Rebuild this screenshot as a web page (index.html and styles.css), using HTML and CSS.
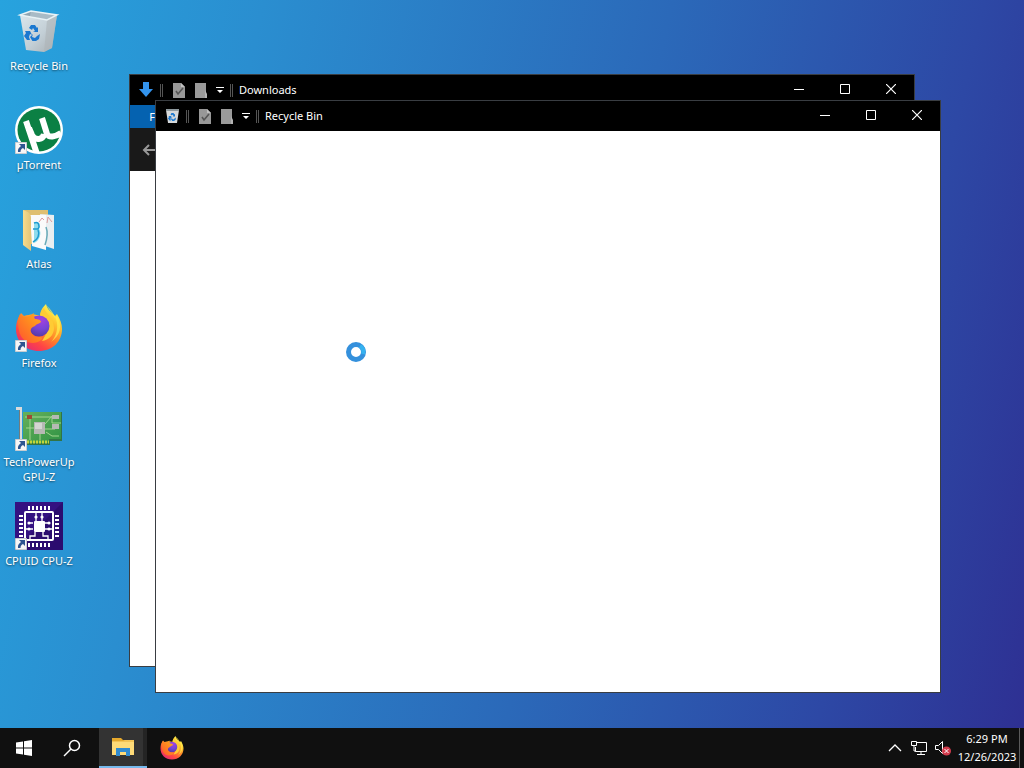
FILE: index.html
```html
<!DOCTYPE html>
<html lang="en">
<head>
<meta charset="utf-8">
<meta name="viewport" content="width=device-width, initial-scale=1">
<title>Desktop</title>
<link rel="stylesheet" href="styles.css">
</head>
<body>
<svg class="defs" aria-hidden="true">
  <defs>
    <linearGradient id="bin-body" x1="0" y1="0" x2="1" y2="1"><stop offset="0" stop-color="#dbe6ec"/><stop offset=".55" stop-color="#c3cfd6"/><stop offset="1" stop-color="#a7adb1"/></linearGradient>
    <linearGradient id="fx-body" x1=".85" y1=".05" x2=".25" y2=".95"><stop offset=".05" stop-color="#fff44f"/><stop offset=".3" stop-color="#ffc12e"/><stop offset=".55" stop-color="#ff842a"/><stop offset=".8" stop-color="#ff4445"/><stop offset="1" stop-color="#e92f6c"/></linearGradient>
    <linearGradient id="fx-head" x1="0" y1="1" x2="1" y2="0"><stop offset="0" stop-color="#ff542f"/><stop offset=".6" stop-color="#ff8c1f"/><stop offset="1" stop-color="#ffab25"/></linearGradient>
    <radialGradient id="fx-globe" cx=".6" cy=".2" r=".9"><stop offset="0" stop-color="#a640df"/><stop offset=".5" stop-color="#7645d6"/><stop offset="1" stop-color="#51379c"/></radialGradient>
    <linearGradient id="folder" x1="0" y1="0" x2="1" y2="0"><stop offset="0" stop-color="#f8dc8c"/><stop offset="1" stop-color="#e3c477"/></linearGradient>
    <linearGradient id="board" x1="0" y1="0" x2="1" y2="1"><stop offset="0" stop-color="#66b05b"/><stop offset="1" stop-color="#2f9344"/></linearGradient>
    <clipPath id="disc"><circle cx="24" cy="24" r="23"/></clipPath>
  </defs>
  <symbol id="recycle" viewBox="0 0 16 16">
    <path fill="#1b78d0" d="M5 3 7 0h4l2 3 1-1v5H9l2-1-2-3-1 2zM1 6h5l2 4-2-1-1 3 1 3H3L0 11l2-3zM9 9l-1 3 3 1 2-2 3-2-1 5-3 2h-3v1L6 12z"/>
  </symbol>
  <symbol id="shortcut" viewBox="0 0 12 12">
    <path fill="#f6f6f6" stroke="#c8ccd0" d="M.5.5h11v11H.5z"/>
    <path fill="#2d5590" d="M4 2h6v6L8 6C6 7 5.500 8 5.500 10H3C2.500 7 4 5.500 6 4z"/>
  </symbol>
  <symbol id="firefox" viewBox="0 0 48 48">
    <path fill="url(#fx-body)" d="M31 0c1 5 5 8 9 12l2-2c3 5 5 10 5 15 0 13-10 22-23 22S1 38 1 25c0-5 1-10 4-14l1-2 3 3c6-2 12-2 16 0 0-5 3-9 6-12z"/>
    <path fill="#ffcb34" d="M29 4c1 5 10 10 10 20 0 7-5 12-12 13 4-6 6-10 4-15-2-5-5-6-6-10 0-3 2-6 4-8z"/>
    <circle cx="24" cy="22" r="10.500" fill="url(#fx-globe)"/>
    <path fill="url(#fx-head)" d="M5 10c1 2 3 3 6 3 3 0 6-3 8-4-1 2 0 4 1 6 3 0 6 1 6 3-2 2-5 2-6 4-3 1-5 3-4 6 1 3 4 5 8 5 3 0 4 1 2 3-6 5-17 4-21-6C3 24 2 15 5 10z"/>
    <path fill="#fff04f" fill-opacity=".7" d="M31 1c5 4 8 9 10 14 3 9 0 18-5 23 9-6 12-16 6-26l-2 2z"/>
  </symbol>
  <symbol id="page-check" viewBox="0 0 14 16">
    <path fill="#989898" d="M1 1h8l4 4v11H1z"/><path fill="#c0c0c0" d="m9 1 4 4H9z"/>
    <path fill="none" stroke="#555" stroke-width="1.600" d="m4 9 2 3 5-6"/>
  </symbol>
  <symbol id="page-plain" viewBox="0 0 14 16">
    <path fill="#9a9a9a" d="M1 1h11v11l1 4H1z"/><path fill="#b4b4b4" d="m11 8 2 4v4h-2z"/>
  </symbol>
  <symbol id="customize" viewBox="0 0 8 8"><path fill="#fff" d="M0 1h8v1H0zM1 4h6L4 7z"/></symbol>
  <symbol id="minimize" viewBox="0 0 10 10"><path fill="#fff" d="M0 5h10v1H0z"/></symbol>
  <symbol id="maximize" viewBox="0 0 10 10"><path fill="none" stroke="#fff" d="M.5.5h9v9h-9z"/></symbol>
  <symbol id="close" viewBox="0 0 10 10"><path fill="none" stroke="#fff" stroke-width="1.200" d="m0 0 10 10M10 0 0 10"/></symbol>
</svg>

<main class="desktop">
  <nav class="shortcuts" aria-label="Desktop icons">
    <button class="shortcut" type="button">
      <svg class="shortcut-icon" viewBox="0 0 48 48">
        <path fill="url(#bin-body)" d="M5 8h37l-5 33-8 4-18-2z"/>
        <path fill="#91a5b2" d="m5 8 11-4 26 4-10 5z"/>
        <path fill="#a9bbc6" d="m16 4-1 5 17 4 10-5z"/>
        <path fill="#aeb4b8" fill-opacity=".6" d="m32 13 10-5-5 33-8 4z"/>
        <path fill="none" stroke="#e8f2f6" stroke-width="1.500" d="m5 8 11-4 26 4-10 5z"/>
        <use href="#recycle" x="9" y="18" width="16" height="16"/>
      </svg>
      <span class="shortcut-label">Recycle Bin</span>
    </button>
    <button class="shortcut" type="button">
      <svg class="shortcut-icon" viewBox="0 0 48 48">
        <circle cx="24" cy="24" r="24" fill="#fff"/><circle cx="24" cy="24" r="21.500" fill="#0b8044"/>
        <g clip-path="url(#disc)"><path fill="none" stroke="#fff" stroke-width="6" d="M11 15l11 33M14 22l3 7c3 6 11 5 12-1M27 12l5 16c2 4 8 3 14-1"/></g>
        <use href="#shortcut" y="36" width="12" height="12"/>
      </svg>
      <span class="shortcut-label">µTorrent</span>
    </button>
    <button class="shortcut" type="button">
      <svg class="shortcut-icon" viewBox="0 0 48 48">
        <path fill="#dfbf70" d="M8 5h25v34H16z"/>
        <path fill="#e9eef0" d="m25 9 14 1v34l-9-3z"/>
        <path fill="#fafafa" d="M15 10h16v35l-14-4z"/>
        <path fill="none" stroke="#dd9b9b" d="m24 17 3-4 2 2M32 18l1-6 4 5"/>
        <path fill="#8fdcec" d="M19 18c5-3 7 2 5 6 3 3 1 12-5 14z"/>
        <path fill="none" stroke="#1c9bd0" stroke-width="1.500" d="M19 18c5-2 6 3 4 6h-5M23 25c2 4 0 10-5 12"/>
        <path fill="none" stroke="#69aab8" stroke-width="1.500" d="M31 22c2 5 1 12-1 18"/>
        <path fill="url(#folder)" d="M8 5c6 2 8 4 8 8v33l-8-6z"/>
      </svg>
      <span class="shortcut-label">Atlas</span>
    </button>
    <button class="shortcut" type="button">
      <svg class="shortcut-icon" viewBox="0 0 48 48">
        <use href="#firefox" width="48" height="48"/><use href="#shortcut" y="36" width="12" height="12"/>
      </svg>
      <span class="shortcut-label">Firefox</span>
    </button>
    <button class="shortcut" type="button">
      <svg class="shortcut-icon" viewBox="0 0 48 48">
        <path fill="#327445" d="M8 9h39v29H35v4H8z"/><path fill="url(#board)" d="M8 9h38v27H34v4H8z"/>
        <path fill="none" stroke="#a2d68e" d="M10 14h27v6h9M15 15v22M20 25h-9M30 21l7-8M30 26h10M25 30v7M31 29l6 4h7"/>
        <path fill="#b6b9b4" d="M19 19h11v12H19zM37 12h7v4h-7zM37 21h7v5h-7z"/><path fill="#d4d6d2" d="M20 20h7v6h-7z"/>
        <path fill="#9c4b32" d="M12 12h5v4h-5z"/>
        <path stroke="#c5d43b" stroke-width="3" stroke-dasharray="2 1" d="M12 39h22"/>
        <path fill="#dadada" d="M1 4h6v35H4V7H1z"/><path fill="#727c7d" d="M4 7h1v32H4z"/>
        <use href="#shortcut" y="36" width="12" height="12"/>
      </svg>
      <span class="shortcut-label">TechPowerUp GPU-Z</span>
    </button>
    <button class="shortcut" type="button">
      <svg class="shortcut-icon" viewBox="0 0 48 48">
        <path fill="#341181" d="M0 0h48v48H0z"/><path fill="#22075d" fill-opacity=".5" d="M48 0v48H0z"/>
        <g fill="none" stroke="#fff">
          <rect x="10" y="10" width="28" height="28" rx="1" stroke-width="2"/>
          <path stroke-width="4" stroke-dasharray="2 2" d="M13 6h22M13 43h22M6 13v22M42 13v22"/>
          <path stroke-width="1.300" d="M21 19v-3M27 19v-3M21 15v-5M27 15v-5M18 21h-3M18 27h-7M30 21h3M30 27h7M15 38v-4h5v-4M33 38v-4h-5v-4"/>
        </g>
        <g fill="#fff"><rect x="19" y="19" width="11" height="11" rx="1"/><circle cx="21" cy="15" r="1.600"/><circle cx="27" cy="15" r="1.600"/><circle cx="14" cy="21" r="1.600"/><circle cx="14" cy="27" r="1.600"/><circle cx="34" cy="21" r="1.600"/><circle cx="34" cy="27" r="1.600"/></g>
        <use href="#shortcut" y="36" width="12" height="12"/>
      </svg>
      <span class="shortcut-label">CPUID CPU-Z</span>
    </button>
  </nav>

  <section class="window window-downloads" aria-label="Downloads">
    <header class="titlebar">
      <svg class="app-icon" viewBox="0 0 16 16"><path fill="#3394ee" d="M5 0h6v7h4l-7 8-7-8h4z"/></svg>
      <span class="divider"></span>
      <button class="quick" type="button" aria-label="Properties"><svg class="page-icon"><use href="#page-check"/></svg></button>
      <button class="quick" type="button" aria-label="New folder"><svg class="page-icon"><use href="#page-plain"/></svg></button>
      <button class="more" type="button" aria-label="Customize toolbar"><svg class="more-icon"><use href="#customize"/></svg></button>
      <span class="divider"></span>
      <h2 class="title">Downloads</h2>
      <button class="control" type="button" aria-label="Minimize"><svg class="control-icon"><use href="#minimize"/></svg></button>
      <button class="control" type="button" aria-label="Maximize"><svg class="control-icon"><use href="#maximize"/></svg></button>
      <button class="control" type="button" aria-label="Close"><svg class="control-icon"><use href="#close"/></svg></button>
    </header>
    <div class="ribbon"><button class="ribbon-tab" type="button">File</button></div>
    <div class="navbar"><button class="back" type="button" aria-label="Back"><svg class="back-icon" viewBox="0 0 14 12"><path fill="none" stroke="#989898" stroke-width="2" d="M14 6H2M7 1 2 6l5 5"/></svg></button></div>
    <div class="content"></div>
  </section>

  <section class="window window-bin" aria-label="Recycle Bin">
    <header class="titlebar">
      <svg class="app-icon" viewBox="0 0 16 16"><path fill="#d6d9db" d="M2 2h13l-2 13H4z"/><path fill="#8f9a9f" d="M2 1h13v2H2z"/><use href="#recycle" x="4" y="5" width="8" height="8"/></svg>
      <span class="divider"></span>
      <button class="quick" type="button" aria-label="Properties"><svg class="page-icon"><use href="#page-check"/></svg></button>
      <button class="quick" type="button" aria-label="New folder"><svg class="page-icon"><use href="#page-plain"/></svg></button>
      <button class="more" type="button" aria-label="Customize toolbar"><svg class="more-icon"><use href="#customize"/></svg></button>
      <span class="divider"></span>
      <h2 class="title">Recycle Bin</h2>
      <button class="control" type="button" aria-label="Minimize"><svg class="control-icon"><use href="#minimize"/></svg></button>
      <button class="control" type="button" aria-label="Maximize"><svg class="control-icon"><use href="#maximize"/></svg></button>
      <button class="control" type="button" aria-label="Close"><svg class="control-icon"><use href="#close"/></svg></button>
    </header>
    <div class="content"></div>
  </section>

  <svg class="busy-cursor" viewBox="0 0 22 22" aria-label="Busy"><circle cx="11" cy="11" r="7.500" fill="none" stroke="#3490dc" stroke-width="5"/><path fill="none" stroke="#35b2f0" stroke-width="4" d="M15 5a7 7 0 0 1 3 8"/></svg>
</main>

<footer class="taskbar">
  <button class="task" type="button" aria-label="Start"><svg class="start-icon" viewBox="0 0 16 16"><path fill="#fff" d="M0 2.500 7 1.500v6H0zM8 1.300 16 0v7.500H8zM0 8.500h7v6l-7-1zM8 8.500h8V16l-8-1.200z"/></svg></button>
  <button class="task" type="button" aria-label="Search"><svg class="search-icon" viewBox="0 0 18 18"><circle cx="11.500" cy="6.500" r="5" fill="none" stroke="#fff" stroke-width="1.500"/><path stroke="#fff" stroke-width="1.500" d="m8 10-7 7"/></svg></button>
  <button class="task task-active" type="button" aria-label="File Explorer"><svg class="explorer-icon" viewBox="0 0 24 20"><path fill="#e6a92d" d="M1 1h9l2 2h11v15H1z"/><path fill="#ffdb78" d="M1 5h22v13H1z"/><path fill="#f4c456" d="M1 4h11l2-1h9v2H1z"/><path fill="#318bd0" d="M5 11h14v8h-4v-4H9v4H5z"/></svg></button>
  <button class="task" type="button" aria-label="Firefox"><svg class="fox-icon"><use href="#firefox"/></svg></button>
  <div class="tray">
    <button class="tray-button" type="button" aria-label="Show hidden icons"><svg class="tray-icon" viewBox="0 0 16 16"><path fill="none" stroke="#fff" stroke-width="1.300" d="m2 11 6-6 6 6"/></svg></button>
    <button class="tray-button" type="button" aria-label="Network"><svg class="tray-icon" viewBox="0 0 16 16"><path fill="none" stroke="#fff" d="M6 2.500h9.500v9H4.500V7M10 12v2M6 14.500h8M.5 1.500h5v4h-5zM3 6v5h2"/></svg></button>
    <button class="tray-button" type="button" aria-label="Volume muted"><svg class="tray-icon" viewBox="0 0 16 16"><path fill="none" stroke="#fff" d="M.5 5.500h3l4-4v12l-4-4h-3z"/><circle cx="11.500" cy="11" r="4.500" fill="#d23b4c"/><path stroke="#fff" d="m9.500 9 4 4M13.500 9l-4 4"/></svg></button>
    <button class="clock" type="button"><span>6:29 PM</span><span>12/26/2023</span></button>
    <button class="show-desktop" type="button" aria-label="Show desktop"></button>
  </div>
</footer>
</body>
</html>
```
FILE: styles.css
```css
* { box-sizing: border-box; }

body {
  margin: 0;
  min-height: 100vh;
  display: flex;
  flex-direction: column;
  background: linear-gradient(103deg, #27a3de 0%, #2a8ed0 22%, #2b69b9 56%, #2d48a5 82%, #2e2f92 100%);
  font: 11px/16px "Noto Sans", "Open Sans", sans-serif;
  color: #fff;
}

button {
  padding: 0;
  border: 0;
  background: none;
  color: inherit;
  font: inherit;
}

svg { display: block; flex: none; }
.defs { position: absolute; width: 0; height: 0; }

.desktop {
  position: relative;
  flex: 1;
}

.shortcuts {
  display: grid;
  grid-auto-rows: 99px;
  width: 78px;
  padding-top: 7px;
}

.shortcut {
  display: flex;
  flex-direction: column;
  align-items: center;
  gap: 3px;
}

.shortcut-icon { width: 48px; height: 48px; }

.shortcut-label {
  line-height: 15px;
  text-shadow: 0 1px 2px #0008;
}

.window {
  position: absolute;
  display: flex;
  flex-direction: column;
  width: 786px;
  height: 593px;
  border: 1px solid #393d42;
  background: #fff;
}

.window-downloads { left: 129px; top: 74px; }
.window-bin { left: 155px; top: 100px; }

.titlebar {
  display: flex;
  align-items: center;
  height: 30px;
  padding-left: 8px;
  background: #000;
}

.app-icon { width: 16px; height: 16px; margin-right: 6px; }

.divider {
  width: 3px;
  height: 13px;
  border: solid #555;
  border-width: 0 1px;
}

.quick {
  display: grid;
  place-items: center;
  width: 22px;
  height: 22px;
}

.quick:first-of-type { margin-left: 5px; }
.page-icon { width: 14px; height: 16px; }
.more { padding: 4px; }
.more-icon { width: 8px; height: 8px; }
.more + .divider { margin: 0 6px 0 2px; }

.title {
  flex: 1;
  margin: 0;
  font: inherit;
}

.control {
  display: grid;
  place-items: center;
  align-self: stretch;
  width: 46px;
  padding-bottom: 2px;
}

.control-icon { width: 10px; height: 10px; }

.ribbon {
  height: 23px;
  background: #202020;
}

.ribbon-tab {
  width: 56px;
  height: 23px;
  background: #0562b0;
}

.navbar {
  display: flex;
  align-items: center;
  height: 43px;
  padding-left: 12px;
  background: #191919;
}

.back-icon { width: 14px; height: 12px; }
.content { flex: 1; background: #fff; }

.busy-cursor {
  position: absolute;
  left: 345px;
  top: 341px;
  width: 22px;
  height: 22px;
}

.taskbar {
  display: flex;
  height: 40px;
  background: #101010;
}

.task {
  display: grid;
  place-items: center;
  width: 48px;
}

.task-active {
  margin: 0 1px 0 3px;
  border-bottom: 2px solid #76b9ed;
  background: #333;
  box-shadow: inset -4px 0 #242424;
}

.start-icon { width: 16px; height: 16px; }
.search-icon { width: 18px; height: 18px; }
.explorer-icon { width: 24px; height: 20px; }
.fox-icon { width: 24px; height: 24px; }

.tray {
  display: flex;
  align-items: center;
  margin-left: auto;
}

.tray-button { width: 24px; padding: 4px; }
.tray-icon { width: 16px; height: 16px; }

.clock {
  display: flex;
  flex-direction: column;
  align-items: center;
  width: 64px;
  line-height: 18px;
}

.show-desktop {
  width: 5px;
  height: 40px;
  border-left: 1px solid #5b5b5b;
}
```
